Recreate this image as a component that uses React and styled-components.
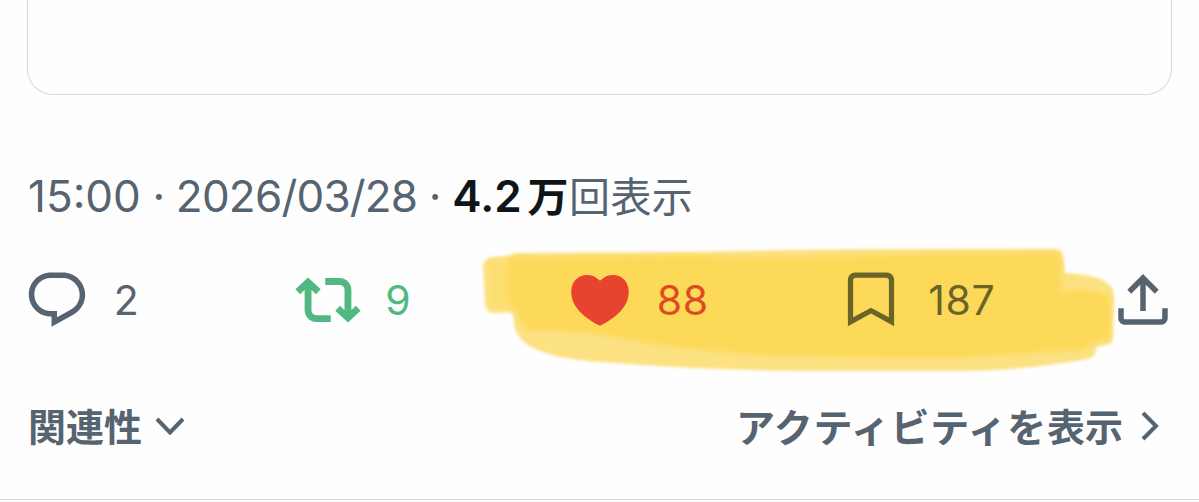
import styled, { createGlobalStyle, css } from 'styled-components';

const paths = {
  reply:
    'M1.751 10c0-4.42 3.584-8 8.005-8h4.366c4.49 0 8.129 3.64 8.129 8.13 0 2.96-1.607 5.68-4.196 7.11l-8.054 4.46v-3.69h-.067c-4.49.1-8.183-3.51-8.183-8.01zm8.005-6c-3.317 0-6.005 2.69-6.005 6 0 3.37 2.77 6.08 6.138 6.01l.351-.01h1.761v2.3l5.087-2.81c1.951-1.08 3.163-3.13 3.163-5.36 0-3.39-2.744-6.13-6.129-6.13H9.756z',
  repost:
    'M4.75 3.79l4.603 4.3-1.706 1.82L6 8.38v7.37c0 .97.784 1.75 1.75 1.75H13V20H7.75c-2.347 0-4.25-1.9-4.25-4.25V8.38L1.853 9.91.147 8.09l4.603-4.3zm11.5 2.71H11V4h5.25c2.347 0 4.25 1.9 4.25 4.25v7.37l1.647-1.53 1.706 1.82-4.603 4.3-4.603-4.3 1.706-1.82L18 15.62V8.25c0-.97-.784-1.75-1.75-1.75z',
  like:
    'M12 5C13.4 3.5 15.1 2.9 16.8 2.9C20 2.9 22.45 5.4 22.45 9C22.45 14.3 18.2 18.2 12 21.4C5.8 18.2 1.55 14.3 1.55 9C1.55 5.4 4 2.9 7.2 2.9C8.9 2.9 10.6 3.5 12 5Z',
  bookmark:
    'M3.6 4.7C3.6 3.1 4.8 2 6.3 2h11.4c1.5 0 2.7 1.1 2.7 2.7v16.8L12 16.9l-8.4 4.6V4.7zM6.5 3.95c-.6 0-1 .4-1 1v13.3l6.5-3.45 6.5 3.45V4.95c0-.6-.4-1-1-1z',
  share:
    'M12 2.59l5.7 5.7-1.41 1.42L13 6.41V16h-2V6.41l-3.3 3.3-1.41-1.42L12 2.59zM21 15l-.02 3.51c0 1.38-1.12 2.49-2.5 2.49H5.5C4.11 21 3 19.88 3 18.5V15h2v3.5c0 .28.22.5.5.5h12.98c.28 0 .5-.22.5-.5L19 15h2z',
};

const actions = [
  { icon: 'reply', count: '2', color: '#566370' },
  { icon: 'repost', count: '9', color: '#52b882' },
  { icon: 'like', count: '88', color: '#e8432f', countColor: '#dc4c20' },
  { icon: 'bookmark', count: '187', color: '#6b6428' },
  { icon: 'share', color: '#566370' },
];

const Marker = () => (
  <MarkerSvg viewBox="470 240 660 140" aria-hidden="true">
    <defs>
      <filter id="soft" x="-5%" y="-10%" width="110%" height="120%">
        <feGaussianBlur stdDeviation="1.8" />
      </filter>
      <filter id="softer" x="-5%" y="-10%" width="110%" height="120%">
        <feGaussianBlur stdDeviation="2.6" />
      </filter>
    </defs>
    <path
      fill="#fce182"
      filter="url(#soft)"
      d="M483 268Q483 258 492 257L508 256Q513 253 522 253L700 252Q800 249 900 249L1056 249Q1062 249 1063 256L1065 273Q1114 275 1114 296L1113 338Q1113 344 1106 345L1096 347Q1097 357 1088 359Q1020 371 960 371L800 371Q700 370 600 362Q514 356 514 322Q514 313 508 312L494 313Q486 313 485 304Z"
    />
    <path
      fill="#fdde70"
      filter="url(#softer)"
      d="M490 262L530 257V309H491Z"
    />
    <path
      fill="#fdd95a"
      filter="url(#softer)"
      d="M511 257L700 255Q760 260 830 256L1056 252Q1060 253 1061 260L1062 292Q1085 286 1110 296L1110 338L1092 344L1084 350Q1020 353 960 358Q860 358 780 356Q700 352 640 342Q580 328 530 331Q518 325 516 308L508 300V262Z"
    />
  </MarkerSvg>
);

const Icon = ({ name }) => (
  <IconSvg viewBox="0 0 24 24">
    <path d={paths[name]} />
  </IconSvg>
);

const App = () => (
  <>
    <GlobalStyle />
    <Post>
      <MediaCard />
      <Meta>
        <Time>15:00</Time>
        <Stamp> · 2026/03/28 · </Stamp>
        <Views>4.2</Views>
        <Unit $strong>万</Unit>
        <Unit>回表示</Unit>
      </Meta>
      <Actions>
        <Marker />
        {actions.map(({ icon, count, color, countColor }) => (
          <Action key={icon} $color={color}>
            <Icon name={icon} />
            {count && <Count $color={countColor}>{count}</Count>}
          </Action>
        ))}
      </Actions>
      <Footer>
        <FooterButton>
          関連性
          <Chevron width="30" height="18" viewBox="0 0 30 18" $gap="13px">
            <path d="M2 2L15 15.5L28 2" />
          </Chevron>
        </FooterButton>
        <FooterButton>
          <Kana>アクティビティを</Kana>表示
          <Chevron width="18" height="30" viewBox="0 0 18 30" $gap="18px">
            <path d="M2 2L15 15L2 28" />
          </Chevron>
        </FooterButton>
      </Footer>
    </Post>
  </>
);

export default App;

const GlobalStyle = createGlobalStyle`
  * {
    box-sizing: border-box;
  }

  body {
    margin: 0;
    background: #fefefe;
    font-family: Inter, 'Noto Sans CJK JP', sans-serif;
    color: #566370;
  }
`;

const Post = styled.article`
  display: flex;
  flex-direction: column;
  height: 500px;
  overflow: hidden;
  border-bottom: 1px solid #d5d8da;
`;

const MediaCard = styled.div`
  flex: none;
  height: 95px;
  margin: 0 27px;
  border: 1px solid #d6d9dd;
  border-top: 0;
  border-radius: 0 0 26px 26px;
`;

const Meta = styled.div`
  display: flex;
  align-items: baseline;
  height: 60px;
  margin: 69px 28px 0;
  font-size: 44px;
  line-height: 60px;
  white-space: pre;
`;

const Time = styled.span``;

const Stamp = styled.span`
  letter-spacing: -0.8px;
`;

const Views = styled.span`
  font-weight: 600;
  color: #10151a;
`;

const Unit = styled.span`
  font-family: 'Noto Sans CJK JP', sans-serif;
  font-size: 41px;
  line-height: 60px;
  letter-spacing: 0.4px;

  ${({ $strong }) =>
    $strong &&
    css`
      margin-left: 6px;
      font-weight: 700;
      color: #10151a;
    `}
`;

const Actions = styled.div`
  position: relative;
  display: grid;
  grid-template-columns: repeat(4, 271.5px) 66px;
  margin: 43px 0 0 23.7px;
`;

const MarkerSvg = styled.svg`
  position: absolute;
  left: 446.3px;
  top: -27px;
  width: 660px;
  height: 140px;
`;

const Action = styled.div`
  position: relative;
  display: flex;
  align-items: center;
  gap: 24px;
  height: 66px;
  color: ${({ $color }) => $color};
`;

const IconSvg = styled.svg`
  flex: none;
  width: 66px;
  height: 66px;
  fill: currentColor;
`;

const Count = styled.span`
  font-size: 41px;
  line-height: 66px;
  letter-spacing: 0.6px;
  color: ${({ $color }) => $color || 'inherit'};
`;

const Footer = styled.div`
  display: flex;
  justify-content: space-between;
  margin: 62px 40px 0 28px;
`;

const FooterButton = styled.a`
  display: flex;
  align-items: center;
  height: 60px;
  font-family: 'Noto Sans CJK JP', sans-serif;
  font-size: 38px;
  font-weight: 700;
  line-height: 60px;
`;

const Kana = styled.span`
  font-size: 39px;
  letter-spacing: 0.7px;
`;

const Chevron = styled.svg`
  flex: none;
  margin: 2px 0 0 ${({ $gap }) => $gap};
  fill: none;
  stroke: currentColor;
  stroke-width: 4;
`;
